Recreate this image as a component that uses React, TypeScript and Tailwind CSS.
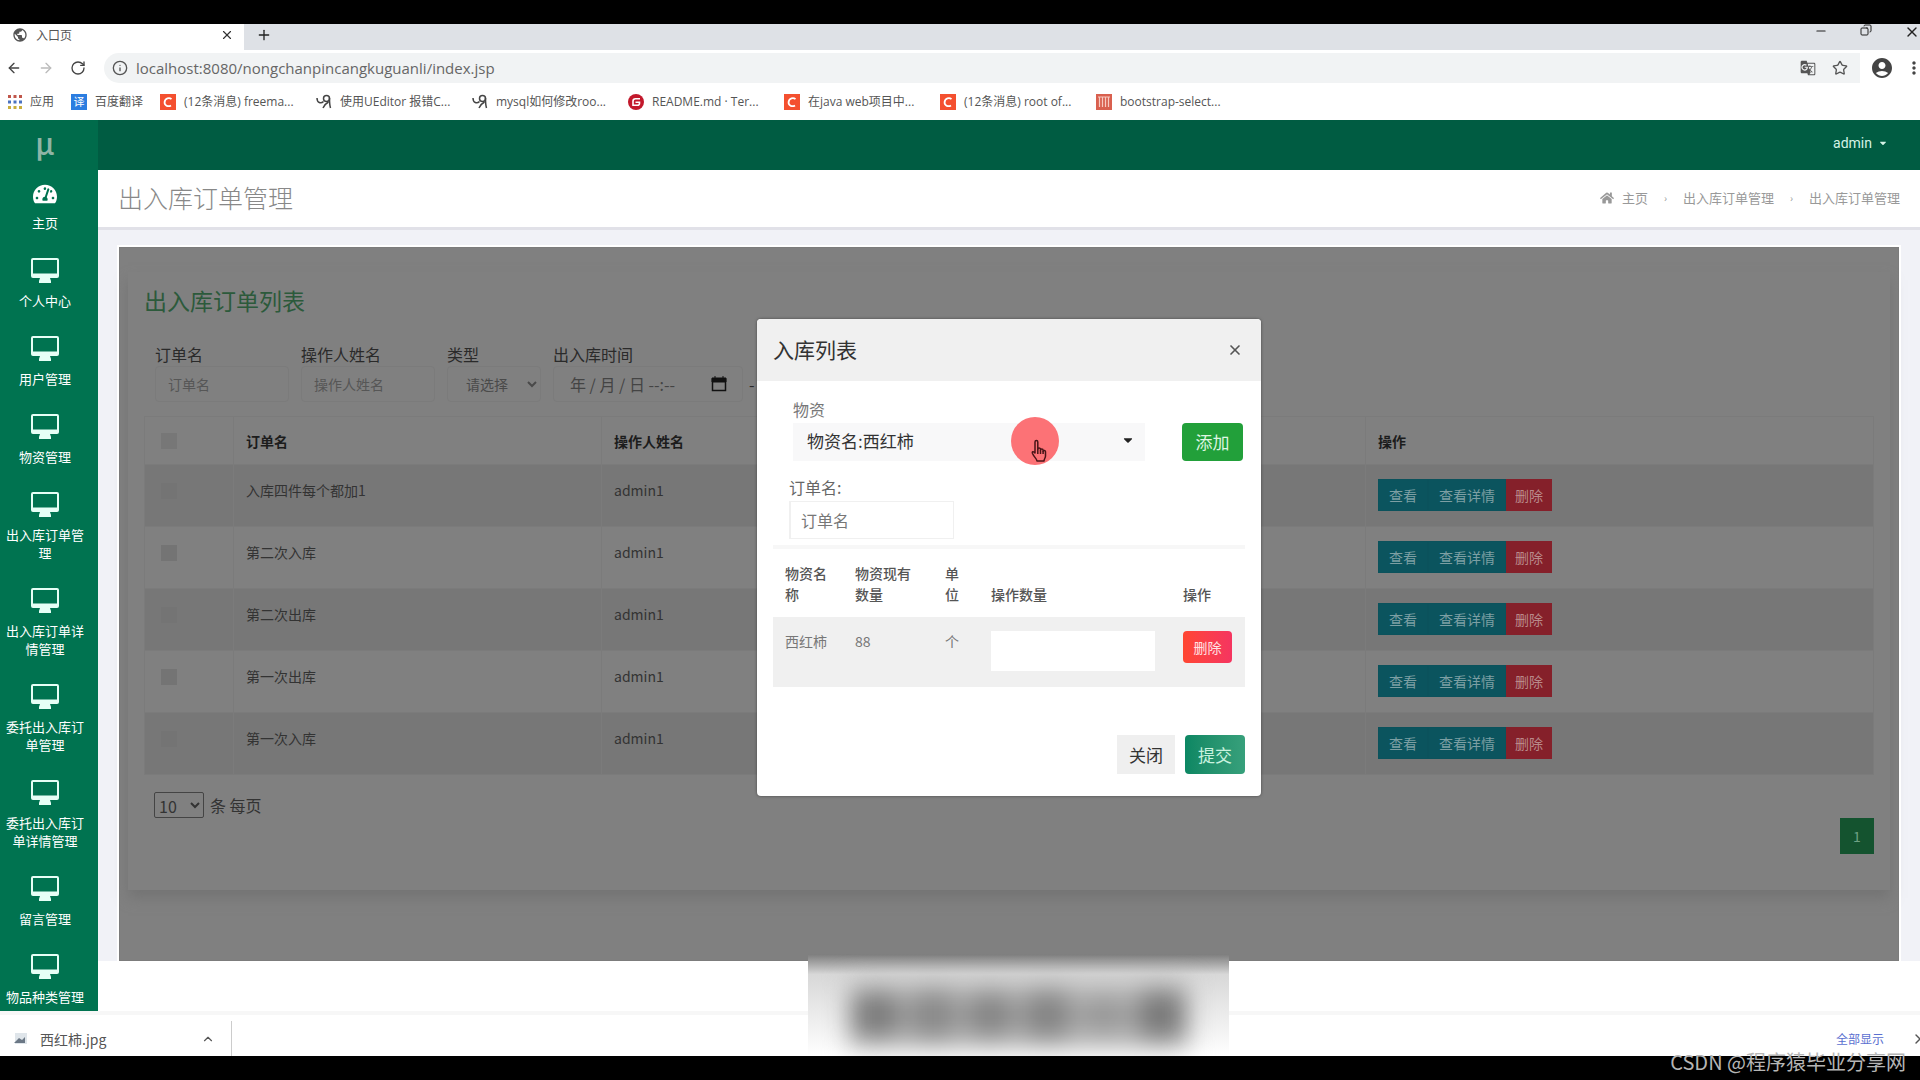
import { useState } from 'react'
import { ArrowLeft, ArrowRight, ChevronUp, Copy, Info, Minus, Plus, RotateCw, Star, X } from 'lucide-react'
import { FaCaretDown, FaHome, FaTachometerAlt } from 'react-icons/fa'
import { MdAccountCircle, MdGTranslate, MdMoreVert, MdPublic } from 'react-icons/md'

interface Bookmark {
  icon: 'c' | 'ue' | 'g' | 'bars'
  title: string
}

const bookmarks: Bookmark[] = [
  { icon: 'c', title: '(12条消息) freema...' },
  { icon: 'ue', title: '使用UEditor 报错C...' },
  { icon: 'ue', title: 'mysql如何修改roo...' },
  { icon: 'g', title: 'README.md · Ter...' },
  { icon: 'c', title: '在java web项目中...' },
  { icon: 'c', title: '(12条消息) root of...' },
  { icon: 'bars', title: 'bootstrap-select...' },
]

const menu = [
  '个人中心',
  '用户管理',
  '物资管理',
  '出入库订单管理',
  '出入库订单详情管理',
  '委托出入库订单管理',
  '委托出入库订单详情管理',
  '留言管理',
  '物品种类管理',
]

const orders = [
  { id: 1, name: '入库四件每个都加1', operator: 'admin1' },
  { id: 2, name: '第二次入库', operator: 'admin1' },
  { id: 3, name: '第二次出库', operator: 'admin1' },
  { id: 4, name: '第一次出库', operator: 'admin1' },
  { id: 5, name: '第一次入库', operator: 'admin1' },
]

function BookmarkIcon({ icon }: { icon: Bookmark['icon'] }) {
  if (icon === 'c') {
    return (
      <svg viewBox="0 0 16 16" className="size-4 shrink-0">
        <rect width="16" height="16" fill="#f4502f" />
        <path d="M11.5 5.2C9.500 3.400 5 4 4.600 8.200c-.3 3.800 4 4.800 6.400 3.200" fill="none" stroke="#fff" strokeWidth="1.800" />
      </svg>
    )
  }
  if (icon === 'ue') {
    return (
      <svg viewBox="0 0 16 16" className="size-4 shrink-0" fill="none" stroke="#444" strokeWidth="1.500">
        <path d="M1 4c0 5 4 6 6.500 3.500" />
        <circle cx="10.500" cy="4.500" r="3" />
        <path d="M13.500 4c0 4 0 7 1 10M12.500 8c-2 1-4 3-5.500 6" />
      </svg>
    )
  }
  if (icon === 'g') {
    return (
      <svg viewBox="0 0 16 16" className="size-4 shrink-0">
        <circle cx="8" cy="8" r="8" fill="#c2182b" />
        <path d="M12 4.800H7.500C6 4.800 5 5.800 5 7.300v4h4.500c1.200 0 2-.8 2-2V8.300H7.500" fill="none" stroke="#fff" strokeWidth="1.600" />
      </svg>
    )
  }
  return (
    <svg viewBox="0 0 16 16" className="size-4 shrink-0">
      <rect width="16" height="16" fill="#d9604f" />
      <path d="M3.500 3v10M6.500 3v10M9.500 3v10M12.500 3v10M2 3h12" stroke="#f7c9c0" strokeWidth="1.200" />
    </svg>
  )
}

function MonitorIcon() {
  return (
    <svg viewBox="0 0 28 25" className="h-[25px] w-7 shrink-0" fill="#e6fff6">
      <path d="M2 0h24a2 2 0 0 1 2 2v16a2 2 0 0 1-2 2h-7l1 3v2H8v-2l1-3H2a2 2 0 0 1-2-2V2a2 2 0 0 1 2-2zm0 2v13.500h24V2z" fillRule="evenodd" />
    </svg>
  )
}

function BrowserChrome() {
  return (
    <header className="shrink-0 bg-white text-[#555]">
      <div className="flex h-[26px] items-stretch justify-between overflow-hidden bg-[#dee1e6]">
        <div className="flex">
          <div className="flex w-[244px] items-center gap-2 bg-white pr-2.5 pb-1 pl-3 text-xs">
            <MdPublic className="size-4" />
            <span className="flex-1">入口页</span>
            <button aria-label="关闭标签页"><X className="size-3.5 text-[#333]" /></button>
          </div>
          <button aria-label="新标签页" className="px-3 pb-1"><Plus className="size-4 text-[#222]" /></button>
        </div>
        <div className="flex items-start gap-8 pr-1 text-[#222]">
          <button aria-label="最小化"><Minus className="size-3.5" /></button>
          <button aria-label="还原"><Copy className="size-3 -scale-x-100" /></button>
          <button aria-label="关闭" className="-mr-1"><X className="size-4" /></button>
        </div>
      </div>
      <div className="flex h-9 items-center">
        <div className="flex w-[104px] items-center gap-4 pl-1.5">
          <button aria-label="后退"><ArrowLeft className="size-4 text-[#444]" /></button>
          <button aria-label="前进"><ArrowRight className="size-4 text-[#bbb]" /></button>
          <button aria-label="刷新"><RotateCw className="size-4 text-[#444]" /></button>
        </div>
        <div className="flex h-[30px] flex-1 items-center gap-2 rounded-l-full bg-[#f1f3f4] pr-3 pl-2">
          <Info className="size-4" />
          <input
            aria-label="地址"
            readOnly
            value="localhost:8080/nongchanpincangkuguanli/index.jsp"
            className="flex-1 bg-transparent font-['Open_Sans','Noto_Sans_CJK_SC',sans-serif] text-[15px] text-[#666] outline-none"
          />
          <MdGTranslate className="size-4" />
          <button aria-label="收藏" className="pl-2"><Star className="size-4" /></button>
        </div>
        <div className="flex items-center gap-2.5 pl-2.5">
          <MdAccountCircle className="size-6 text-[#444]" />
          <MdMoreVert className="-mr-1 size-5 text-[#444]" />
        </div>
      </div>
      <nav className="flex h-[34px] items-center pb-0.5 font-['Open_Sans','Noto_Sans_CJK_SC',sans-serif] text-xs">
        <a href="#apps" className="flex w-[71px] items-center gap-2 pl-2">
          <svg viewBox="0 0 14 14" className="size-3.5">
            <path d="M0 1.500h14" stroke="#c0564a" strokeWidth="3" strokeDasharray="3 2.500" />
            <path d="M0 7h14" stroke="#4a72c0" strokeWidth="3" strokeDasharray="3 2.500" />
            <path d="M0 12.500h14" stroke="#c9ae3c" strokeWidth="3" strokeDasharray="3 2.500" />
          </svg>
          应用
        </a>
        <a href="#fanyi" className="flex w-[89px] items-center gap-2">
          <span className="flex size-4 items-center justify-center bg-[#2b7de0] text-[11px] leading-4 text-white">译</span>
          百度翻译
        </a>
        {bookmarks.map((b) => (
          <a key={b.title} href="#bookmark" className="flex w-[156px] items-center gap-2 whitespace-nowrap">
            <BookmarkIcon icon={b.icon} />
            {b.title}
          </a>
        ))}
      </nav>
    </header>
  )
}

function Sidebar() {
  return (
    <aside className="flex w-[98px] shrink-0 flex-col overflow-hidden bg-[#007350] text-white">
      <div className="flex h-[50px] shrink-0 items-center justify-center bg-[#006b4b] pr-2 pb-1.5 text-3xl leading-none font-medium text-[#8fb5a6]">
        μ
      </div>
      <nav className="pr-2 text-center text-[13px] leading-[18px]">
        <a href="#home" className="flex flex-col items-center gap-2 px-1 pt-3 pb-4">
          <FaTachometerAlt className="size-6" />
          主页
        </a>
        {menu.map((item) => (
          <a key={item} href="#menu" className="flex flex-col items-center gap-[9px] px-1 pt-2.5 pb-4">
            <MonitorIcon />
            {item}
          </a>
        ))}
      </nav>
    </aside>
  )
}

function Filters() {
  const field = 'h-9 rounded border border-[#7b7b7b] bg-transparent px-3 text-sm text-[#4a4a4a] placeholder:text-[#565656]'
  return (
    <form className="flex items-end gap-3 pl-[11px] text-base leading-6 text-[#2a2a2a]">
      <div className="flex w-[134px] flex-col">
        <label htmlFor="f-name">订单名</label>
        <input id="f-name" placeholder="订单名" className={field} />
      </div>
      <div className="flex w-[134px] flex-col">
        <label htmlFor="f-operator">操作人姓名</label>
        <input id="f-operator" placeholder="操作人姓名" className={field} />
      </div>
      <div className="flex w-[94px] flex-col">
        <label htmlFor="f-type">类型</label>
        <select id="f-type" className="h-9 rounded border border-[#7b7b7b] bg-transparent pl-3.5 text-sm text-[#4a4a4a]">
          <option>请选择</option>
        </select>
      </div>
      <div className="relative flex w-[190px] flex-col">
        <label htmlFor="f-time">出入库时间</label>
        <input
          id="f-time"
          placeholder="年 / 月 / 日 --:--"
          className="h-9 rounded border border-[#7b7b7b] bg-transparent px-4 text-base text-[#4a4a4a] placeholder:text-[#444]"
        />
        <svg viewBox="0 0 16 16" className="absolute right-4 bottom-2.5 size-4">
          <path d="M1.500 3.500h13v11h-13z" fill="none" stroke="#111" strokeWidth="1.500" />
          <path d="M1 2h14v4H1zM4 0v3M12 0v3" fill="#111" stroke="#111" />
        </svg>
      </div>
      <span className="-ml-1.5 pb-1.5">-</span>
    </form>
  )
}

function OrderTable() {
  return (
    <table className="w-full table-fixed text-left text-sm text-[#333]">
      <colgroup>
        <col className="w-[89px]" />
        <col className="w-[368px]" />
        <col className="w-[160px]" />
        <col />
        <col className="w-[508px]" />
      </colgroup>
      <thead>
        <tr className="h-12 text-[#1c1c1c]">
          <th className="border border-[#7b7b7b] px-4">
            <input type="checkbox" aria-label="全选" className="block size-4 appearance-none bg-[#777]" />
          </th>
          <th className="border border-[#7b7b7b] px-3">订单名</th>
          <th className="border-y border-[#7b7b7b] px-3">操作人姓名</th>
          <th className="border-y border-[#7b7b7b]"></th>
          <th className="border border-[#7b7b7b] px-3">操作</th>
        </tr>
      </thead>
      <tbody>
        {orders.map((o) => (
          <tr key={o.id} className="h-[62px] align-top odd:bg-[#777]">
            <td className="border border-[#7b7b7b] px-4 pt-[18px]">
              <input type="checkbox" aria-label={o.name} className="block size-4 appearance-none bg-[#747474]" />
            </td>
            <td className="border border-[#7b7b7b] px-3 pt-[15px]">{o.name}</td>
            <td className="border-y border-[#7b7b7b] px-3 pt-[15px]">{o.operator}</td>
            <td className="border-y border-[#7b7b7b]"></td>
            <td className="border border-[#7b7b7b] px-3 pt-3.5">
              <div className="flex text-[#7d9fa3]">
                <button className="h-8 border border-[#0b525c] bg-[#0b545e] px-2.5">查看</button>
                <button className="h-8 border border-[#0b525c] bg-[#0b545e] px-2.5">查看详情</button>
                <button className="h-8 border border-[#85202a] bg-[#85202a] px-2 text-[#b98a8a]">删除</button>
              </div>
            </td>
          </tr>
        ))}
      </tbody>
    </table>
  )
}

function StockModal() {
  const [orderName, setOrderName] = useState('')
  const [amount, setAmount] = useState('')

  return (
    <div role="dialog" aria-labelledby="modal-title" className="relative w-[504px] rounded bg-white text-[#555] shadow-[0_0_3px_#444]">
      <div className="flex h-[62px] items-center justify-between rounded-t bg-[#f0f0f0] pr-[18px] pl-4">
        <h2 id="modal-title" className="text-[21px] text-[#333]">入库列表</h2>
        <button aria-label="关闭"><X className="size-4 text-[#555]" strokeWidth={2.5} /></button>
      </div>
      <div className="px-4 pt-3.5">
        <div className="flex items-end justify-between pr-0.5 pl-5">
          <div className="flex flex-col">
            <label htmlFor="goods" className="leading-7 text-[#777]">物资</label>
            <div className="relative">
              <select id="goods" className="h-[38px] w-[352px] appearance-none bg-[#f8f8f9] px-3.5 pb-0.5 text-[17px] text-[#333]">
                <option>物资名:西红柿</option>
              </select>
              <FaCaretDown className="pointer-events-none absolute top-2.5 right-2.5 size-3.5 text-[#222]" />
            </div>
          </div>
          <button className="h-[38px] w-[61px] rounded bg-[#22a03a] text-[17px] text-[#dff5e2]">添加</button>
        </div>
        <div className="mt-3 flex flex-col items-start pl-4">
          <label htmlFor="order-name" className="leading-7 text-[#666]">订单名:</label>
          <input
            id="order-name"
            value={orderName}
            onChange={(e) => setOrderName(e.target.value)}
            placeholder="订单名"
            className="h-[38px] w-[165px] border border-l-2 border-[#f0f0f0] px-2.5 placeholder:text-[#777]"
          />
        </div>
        <table className="mt-1.5 w-full table-fixed border-t-4 border-[#f7f7f7] text-left text-sm leading-[21px]">
          <colgroup>
            <col className="w-[70px]" />
            <col className="w-[90px]" />
            <col className="w-[46px]" />
            <col />
            <col className="w-[72px]" />
          </colgroup>
          <thead>
            <tr className="h-[70px] align-bottom text-[#555]">
              <th className="pr-3 pb-3 pl-3 font-medium">物资名称</th>
              <th className="pr-5 pb-3 pl-3 font-medium">物资现有数量</th>
              <th className="px-3 pb-3 font-medium">单位</th>
              <th className="px-3 pb-3 font-medium">操作数量</th>
              <th className="px-2.5 pb-3 font-medium">操作</th>
            </tr>
          </thead>
          <tbody>
            <tr className="h-[70px] bg-[#f0f0f0] align-top text-[#777]">
              <td className="px-3 pt-3.5">西红柿</td>
              <td className="px-3 pt-3.5">88</td>
              <td className="px-3 pt-3.5">个</td>
              <td className="px-3 pt-3.5">
                <input
                  aria-label="操作数量"
                  value={amount}
                  onChange={(e) => setAmount(e.target.value)}
                  className="h-10 w-[164px] bg-white px-3"
                />
              </td>
              <td className="px-2.5 pt-3.5">
                <button className="h-8 w-[49px] rounded-sm bg-linear-to-r from-[#ff4630] to-[#f53560] text-[#ffe3e3]">删除</button>
              </td>
            </tr>
          </tbody>
        </table>
      </div>
      <div className="flex justify-end gap-2.5 px-4 pt-12 pb-[22px]">
        <button className="h-[39px] w-[58px] bg-[#efefef] text-[17px] text-[#333]">关闭</button>
        <button className="h-[39px] w-[60px] rounded bg-linear-to-r from-[#0b8763] to-[#37a07b] text-[17px] text-[#c9f2df]">提交</button>
      </div>
      {/* click highlight and pointer */}
      <div className="pointer-events-none absolute top-[98px] left-[254px] size-12 rounded-full bg-[#fc7276]">
        <svg viewBox="0 0 20 24" className="absolute top-[22px] left-[18px] h-6 w-5" fill="#fc7276" stroke="#4a1518" strokeWidth="1.500" strokeLinejoin="round">
          <path d="M6 14V3c0-2 2.800-2 2.800 0v7c0-1.500 2.500-1.500 2.700 0v1c.2-1.300 2.500-1.200 2.600.2v1c.5-1.200 2.400-.9 2.400.6v4.200c0 2-1.500 3-1.500 5H8c0-2-3-4-4.500-7.500C2.700 12.500 4.500 12 6 14z" />
          <path d="M8.800 10v5M11.500 11v4M14.100 12v3" fill="none" />
        </svg>
      </div>
    </div>
  )
}

export default function App() {
  return (
    <div className="relative flex h-screen flex-col overflow-hidden bg-black py-6 font-['Noto_Sans_CJK_SC',sans-serif]">
      <BrowserChrome />

      <div className="flex min-h-0 flex-1 bg-white">
        <Sidebar />
        <div className="flex min-w-0 flex-1 flex-col">
          <div className="flex h-[50px] shrink-0 items-center justify-end bg-[#005c42] pr-8 pb-1">
            <button className="flex items-center gap-1.5 font-[Roboto,sans-serif] text-sm text-[#d5f3e6]">
              admin <FaCaretDown className="size-2.5" />
            </button>
          </div>

          <main className="relative min-h-0 flex-1 overflow-hidden">
            <div className="flex h-[60px] items-center justify-between border-b-3 border-[#e1e1e8] bg-white pr-5 pb-0.5 pl-5 text-[#999]">
              <h1 className="text-[25px] font-light text-[#888]">出入库订单管理</h1>
              <nav className="flex items-center gap-4 text-[13px]">
                <a href="#home" className="flex items-center gap-2"><FaHome className="size-3.5" />主页</a>
                <span className="text-[10px]">›</span>
                <a href="#orders">出入库订单管理</a>
                <span className="text-[10px]">›</span>
                <span>出入库订单管理</span>
              </nav>
            </div>

            <div className="bg-[#f1f2f7] px-[21px] pt-[17px]">
              <div className="border border-[#7c7c7c] bg-[#808080] px-2 pt-6 pb-[70px] outline-2 outline-white">
                <section className="px-4 pt-1.5 pb-9 shadow-[0_8px_12px_#747474]">
                  <h2 className="text-[23px] leading-[44px] text-[#2c5a3b]">出入库订单列表</h2>
                  <div className="pt-5"><Filters /></div>
                  <div className="pt-3.5"><OrderTable /></div>
                  <div className="flex items-center gap-1.5 pt-[17px] pl-2.5 text-[#333]">
                    <select aria-label="每页条数" className="h-[26px] w-[50px] rounded-xs border border-[#444] text-base">
                      <option>10</option>
                    </select>
                    <span>条 每页</span>
                  </div>
                  <div className="flex justify-end">
                    <button className="h-9 w-[34px] bg-[#14532f] text-sm text-[#6fa184]">1</button>
                  </div>
                </section>
              </div>
            </div>

            <div className="absolute inset-0 flex items-start justify-center pt-[149px]">
              <StockModal />
            </div>
          </main>
        </div>
      </div>

      <footer className="flex h-[45px] shrink-0 items-center justify-between border-t-4 border-[#f7f7f7] bg-white pt-1.5 text-sm text-[#555]">
        <div className="flex h-full w-[232px] items-center gap-3 border-r border-[#ccc] pr-4 pl-3">
          <svg viewBox="0 0 16 16" className="size-4">
            <path d="M3 2h12v11H3z" fill="#dfe5ea" />
            <path d="M2 12l5-5 3 2 3-3v6z" fill="#6b7785" />
          </svg>
          <span className="flex-1">西红柿.jpg</span>
          <button aria-label="更多"><ChevronUp className="size-3.5" /></button>
        </div>
        <div className="flex items-center gap-7">
          <a href="#downloads" className="text-xs text-[#5a6fd0]">全部显示</a>
          <button aria-label="关闭下载栏" className="-mr-2"><X className="size-4" /></button>
        </div>
      </footer>

      {/* smeared caption strip */}
      <div className="absolute bottom-6 left-1/2 h-[102px] w-[421px] -translate-x-[152px] overflow-hidden bg-linear-to-b from-[#7d7d7d] via-[#d8d8d8] via-20% to-white">
        <div className="mx-10 mt-7 flex h-[66px] items-center justify-between bg-[#b8b8b8] px-1 blur-md">
          <span className="h-11 w-12 rounded-xl bg-[#7c7c7c]" />
          <span className="h-12 w-12 rounded-xl bg-[#8a8a8a]" />
          <span className="h-11 w-12 rounded-xl bg-[#868686]" />
          <span className="h-12 w-12 rounded-xl bg-[#858585]" />
          <span className="h-9 w-12 rounded-xl bg-[#989898]" />
          <span className="h-12 w-12 rounded-xl bg-[#7a7a7a]" />
        </div>
      </div>
      <div className="absolute right-3.5 bottom-1 text-xl leading-7 text-[#b5b5b5]">CSDN @程序猿毕业分享网</div>
    </div>
  )
}
